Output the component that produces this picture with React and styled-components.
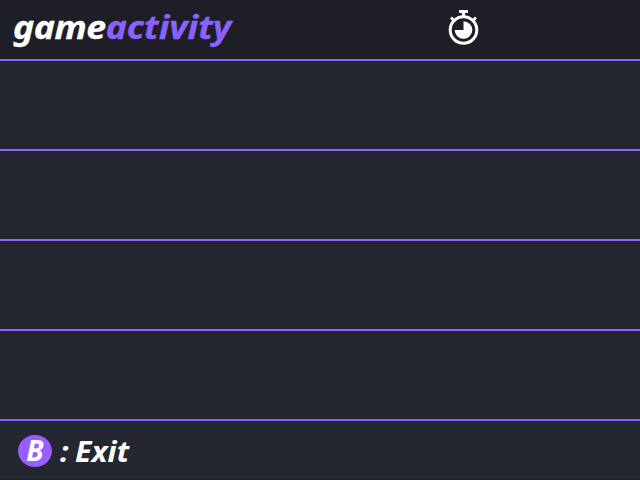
import React from "react";
import styled, { createGlobalStyle } from "styled-components";

const Global = createGlobalStyle`
  body { margin: 0; background: #24272f; overflow: hidden; }
`;
const Screen = styled.main`
  width: 640px;
  height: 480px;
  box-sizing: border-box;
  display: flex;
  flex-direction: column;
  background: #24272f;
  border-bottom: 1px solid #221f28;
  color: #fff;
  font-family: "Noto Sans", "Open Sans", sans-serif;
  font-weight: 700;
  font-style: italic;
`;
const Header = styled.header`
  height: 59px;
  flex: none;
  display: flex;
  align-items: flex-start;
  background: #1e1e26;
  border-bottom: 2px solid #8b62ff;
`;
const Title = styled.h1`
  margin: 4px 0 0 13px;
  width: 434px;
  font-size: 33px;
  line-height: 46px;
  font-weight: 700;
  white-space: nowrap;
  transform: scaleX(1.08);
  transform-origin: left;
  margin-right: 0;
  -webkit-text-stroke: 0.3px currentColor;
  letter-spacing: -0.4px;
`;
const Accent = styled.span`
  color: #8b62ff;
  letter-spacing: 0;
`;
const Timer = styled.svg`
  width: 34px;
  height: 38px;
  margin-top: 9px;
`;
const Row = styled.div`
  height: 88px;
  flex: none;
  border-bottom: 2px solid #8b62ff;
`;
const Footer = styled.footer`
  display: flex;
  align-items: flex-start;
  flex: 1;
  padding: 14px 0 0 18px;
`;
const Key = styled.span`
  width: 34px;
  height: 32px;
  border-radius: 50%;
  background: #975fff;
  display: flex;
  align-items: center;
  justify-content: center;
  font-size: 28px;
  line-height: 30px;
  padding-bottom: 2px;
  box-sizing: border-box;
`;
const Action = styled.span`
  margin-left: 8px;
  font-size: 28px;
  line-height: 32px;
  white-space: pre;
  transform: scaleX(1.08);
  transform-origin: left;
  word-spacing: -1.4px;
`;

export default function App() {
  return (
    <>
      <Global />
      <Screen>
        <Header>
          <Title>game<Accent>activity</Accent></Title>
          <Timer viewBox="0 0 34 38" fill="none" stroke="#fff">
            <circle cx="16.5" cy="21" r="13.3" strokeWidth="3" />
            <path d="M12 2.5h9M16.5 2v6" strokeWidth="3" />
            <path d="m4 8.5 3 3M29 8.5l-3 3" strokeWidth="2.8" />
            <path d="M16.5 12.2A8.8 8.8 0 1 1 7.7 21h8.8Z" fill="#fff" stroke="none" />
          </Timer>
        </Header>
        <Row /><Row /><Row /><Row />
        <Footer><Key>B</Key><Action>: Exit</Action></Footer>
      </Screen>
    </>
  );
}
